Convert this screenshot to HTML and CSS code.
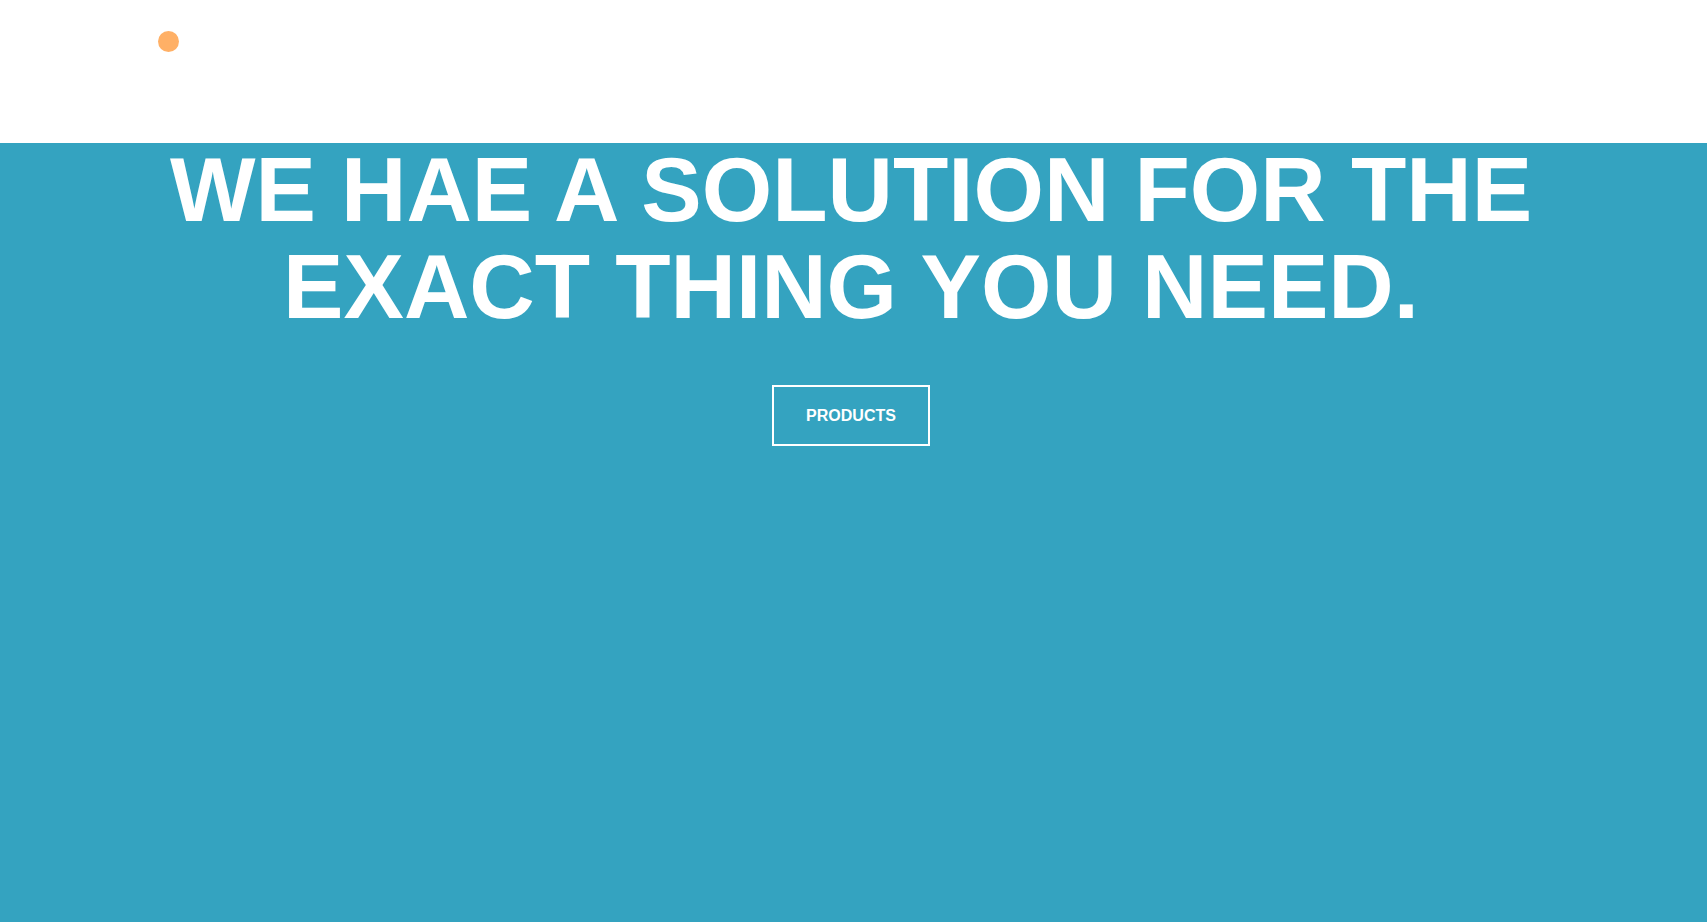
FILE: index.html
```html
<!DOCTYPE html>
<html lang="en">
<head>
<meta charset="utf-8">
<title>Solutions</title>
<link rel="stylesheet" href="styles.css">
</head>
<body>
<header class="site-header">
  <span class="logo-dot"></span>
</header>
<section class="hero">
  <h1 class="hero-title">WE HAE A SOLUTION FOR THE<br>EXACT THING YOU NEED.</h1>
  <a class="hero-button" href="#">PRODUCTS</a>
</section>
</body>
</html>
```

FILE: styles.css
```css
html, body {
  margin: 0;
  padding: 0;
  height: 100%;
}
body {
  font-family: "Liberation Sans", Arial, sans-serif;
  background: #34a3c0;
  display: flex;
  flex-direction: column;
  overflow: hidden;
}
.site-header {
  height: 143px;
  background: #ffffff;
  box-sizing: border-box;
  padding: 31px 0 0 158px;
  flex: none;
}
.logo-dot {
  display: block;
  width: 21px;
  height: 21px;
  border-radius: 50%;
  background: #ffb066;
}
.hero {
  flex: 1;
  background: #34a3c0;
  display: flex;
  flex-direction: column;
  align-items: center;
  padding-right: 5px;
}
.hero-title {
  margin: -2px 0 0;
  font-size: 90.6px;
  line-height: 97px;
  font-weight: 700;
  color: #ffffff;
  text-align: center;
}
.hero-button {
  margin-top: 50px;
  box-sizing: border-box;
  height: 61px;
  padding: 0 32px;
  border: 2px solid #ffffff;
  color: #ffffff;
  font-size: 16px;
  font-weight: 700;
  line-height: 57px;
  text-decoration: none;
}
```
